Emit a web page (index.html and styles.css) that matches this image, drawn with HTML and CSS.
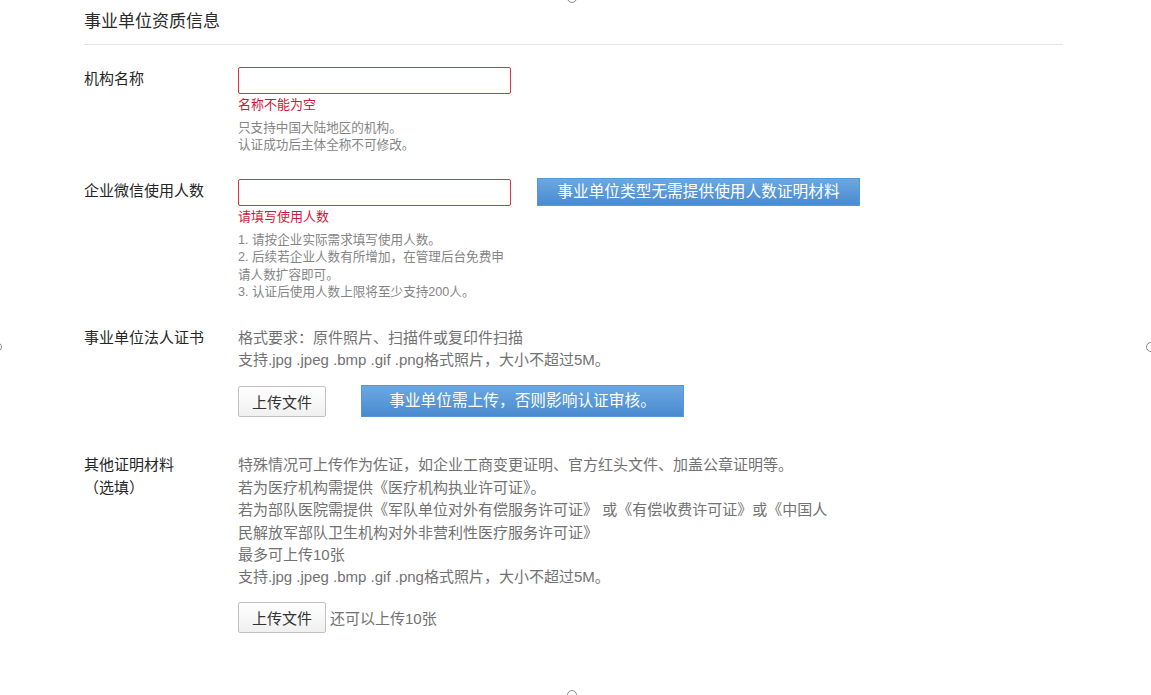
FILE: index.html
```html
<!DOCTYPE html>
<html lang="zh-CN">
<head>
<meta charset="utf-8">
<title>事业单位资质信息</title>
<link rel="stylesheet" href="styles.css">
</head>
<body>
<div class="page">
  <section class="panel">
    <h2 class="panel-title">事业单位资质信息</h2>
    <div class="form">
      <div class="row row-name">
        <div class="label label-input">机构名称</div>
        <div class="field">
          <input class="input is-error" type="text">
          <div class="error">名称不能为空</div>
          <div class="hint">只支持中国大陆地区的机构。<br>认证成功后主体全称不可修改。</div>
        </div>
      </div>
      <div class="row row-count">
        <div class="label label-input">企业微信使用人数</div>
        <div class="field">
          <div class="input-line">
            <input class="input is-error" type="text">
            <div class="tip-btn tip-count">事业单位类型无需提供使用人数证明材料</div>
          </div>
          <div class="error">请填写使用人数</div>
          <div class="hint">1. 请按企业实际需求填写使用人数。<br>2. 后续若企业人数有所增加，在管理后台免费申<br>请人数扩容即可。<br>3. 认证后使用人数上限将至少支持200人。</div>
        </div>
      </div>
      <div class="row row-cert">
        <div class="label">事业单位法人证书</div>
        <div class="field">
          <div class="text">格式要求：原件照片、扫描件或复印件扫描<br>支持.jpg .jpeg .bmp .gif .png格式照片，大小不超过5M。</div>
          <div class="upload-line">
            <button class="upload-btn" type="button">上传文件</button>
            <div class="tip-btn tip-upload">事业单位需上传，否则影响认证审核。</div>
          </div>
        </div>
      </div>
      <div class="row row-other">
        <div class="label">其他证明材料<br>（选填）</div>
        <div class="field">
          <div class="text text-long">特殊情况可上传作为佐证，如企业工商变更证明、官方红头文件、加盖公章证明等。<br>若为医疗机构需提供《医疗机构执业许可证》。<br>若为部队医院需提供《军队单位对外有偿服务许可证》 或《有偿收费许可证》或《中国人<br>民解放军部队卫生机构对外非营利性医疗服务许可证》<br>最多可上传10张<br>支持.jpg .jpeg .bmp .gif .png格式照片，大小不超过5M。</div>
          <div class="upload-line upload-line-other">
            <button class="upload-btn" type="button">上传文件</button>
            <span class="remain">还可以上传10张</span>
          </div>
        </div>
      </div>
    </div>
  </section>
  <div class="handle handle-top"></div>
  <div class="handle handle-left"></div>
  <div class="handle handle-right"></div>
  <div class="handle handle-bottom"></div>
</div>
</body>
</html>
```
FILE: styles.css
```css
* {
  box-sizing: border-box;
}

body {
  margin: 0;
  background: #fff;
  font-family: "Liberation Sans", "Noto Sans CJK SC", sans-serif;
  color: #333;
}

.page {
  position: relative;
  width: 1151px;
  height: 695px;
  overflow: hidden;
}

.panel {
  width: 979px;
  margin-left: 84px;
}

.panel-title {
  margin: 0;
  height: 45px;
  padding-top: 2px;
  font-size: 17px;
  font-weight: normal;
  line-height: 40px;
  color: #2b2b2b;
  border-bottom: 1px solid #e3e3e3;
}

.form {
  display: flex;
  flex-direction: column;
}

.row {
  display: grid;
  grid-template-columns: 154px 1fr;
}

.row-name {
  margin-top: 22px;
}

.row-count {
  margin-top: 24px;
}

.row-cert {
  margin-top: 26px;
}

.row-other {
  margin-top: 37px;
}

.label {
  font-size: 15px;
  line-height: 22px;
  color: #262626;
}

.label-input {
  padding-top: 1px;
}

.row-other .label {
  line-height: 22.4px;
}

.field {
  display: flex;
  flex-direction: column;
  align-items: flex-start;
}

.input {
  display: block;
  width: 273px;
  height: 27px;
  margin: 0;
  padding: 0 6px;
  border: 1px solid #ccc;
  border-radius: 2px;
  background: #fff;
  font: inherit;
  outline: none;
}

.input.is-error {
  border-color: #d7334d;
}

.input-line {
  display: flex;
  align-items: center;
  height: 27px;
}

.error {
  margin-top: 2px;
  font-size: 13px;
  line-height: 18px;
  color: #d2173b;
}

.hint {
  margin-top: 6px;
  font-size: 12.6px;
  line-height: 17.4px;
  color: #858585;
}

.text {
  font-size: 15px;
  line-height: 22px;
  color: #727272;
}

.text-long {
  line-height: 22.4px;
}

.tip-btn {
  width: 323px;
  border: 1px solid #5896d4;
  background: linear-gradient(#6ba8e2, #4a8acf);
  color: #fff;
  text-align: center;
  font-size: 15.7px;
  white-space: nowrap;
}

.tip-count {
  height: 28px;
  line-height: 26px;
  margin-left: 26px;
}

.tip-upload {
  height: 32px;
  line-height: 30px;
  margin-left: 35px;
}

.upload-line {
  display: flex;
  align-items: center;
  margin-top: 14px;
}

.upload-line-other {
  margin-top: 13px;
}

.upload-btn {
  width: 88px;
  height: 31px;
  padding: 0;
  border: 1px solid #c2c2c2;
  border-radius: 2px;
  background: linear-gradient(#ffffff, #f0f0f0);
  font-family: inherit;
  font-size: 15px;
  color: #333;
  cursor: pointer;
}

.remain {
  margin-left: 4px;
  font-size: 15px;
  color: #727272;
}

.handle {
  position: absolute;
  width: 10px;
  height: 10px;
  border: 1px solid #8a8a8a;
  border-radius: 50%;
  background: #fff;
}

.handle-top {
  left: 567px;
  top: -7px;
}

.handle-bottom {
  left: 567px;
  top: 690px;
}

.handle-left {
  left: -8px;
  top: 342px;
}

.handle-right {
  left: 1146px;
  top: 342px;
}
```
